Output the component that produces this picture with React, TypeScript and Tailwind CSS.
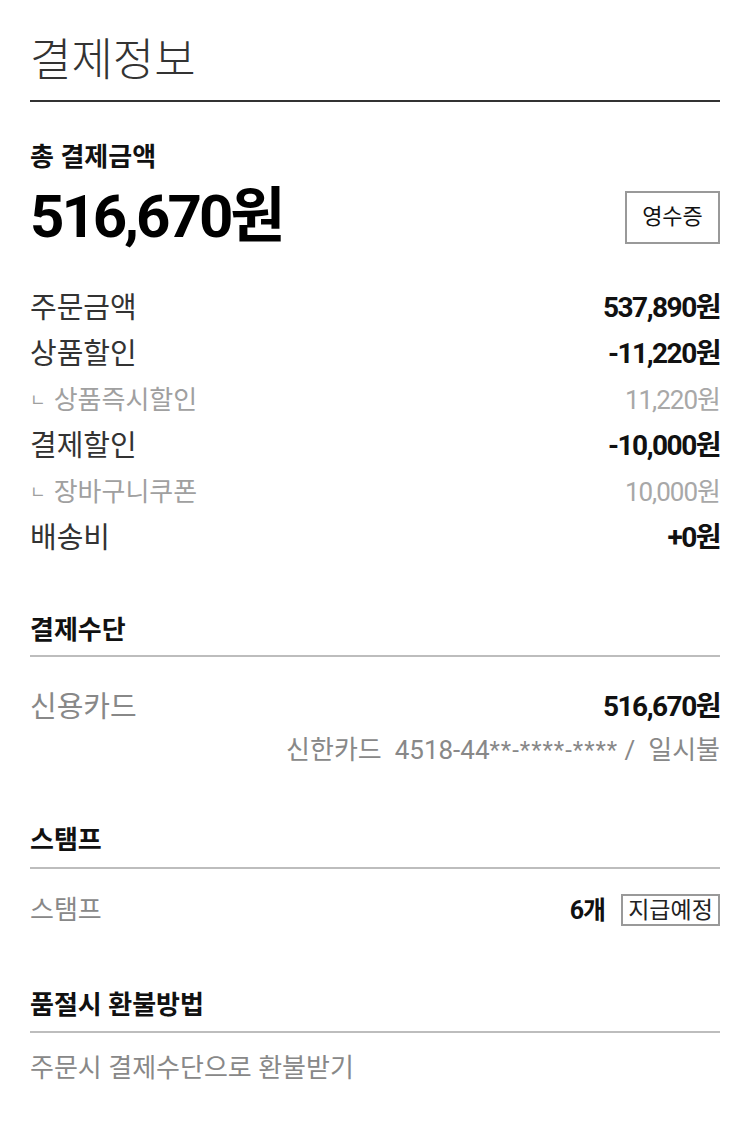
import React from "react";

const F = "font-['Roboto','Noto_Sans_CJK_KR',sans-serif]";

function Row({
  label,
  value,
  sub,
}: {
  label: string;
  value: string;
  sub?: boolean;
}) {
  if (sub) {
    return (
      <div className="flex h-[46px] items-center justify-between">
        <span className="flex items-center text-[26px] leading-none text-[#a0a0a0]">
          <span className="mr-[8px] text-[17px]">ㄴ</span>
          {label}
        </span>
        <span className="text-[26px] leading-none tracking-[-1px] text-[#a8a8a8]">
          {value}
        </span>
      </div>
    );
  }
  return (
    <div className="flex h-[46px] items-center justify-between">
      <span className="text-[29px] leading-none text-[#333]">{label}</span>
      <span className="text-[28px] font-bold leading-none tracking-[-1.5px] text-[#111]">
        {value}
      </span>
    </div>
  );
}

function SectionHeader({ title, pb }: { title: string; pb: string }) {
  return (
    <div className={`border-b-2 border-[#bdbdbd] ${pb}`}>
      <div className="flex h-[30px] items-center text-[26px] font-bold leading-none text-[#111]">
        {title}
      </div>
    </div>
  );
}

export default function App() {
  return (
    <div className={`${F} min-h-[1126px] w-[750px] bg-white px-[30px]`}>
      <div className="border-b-2 border-[#333] pt-[34px] pb-[14px]">
        <h1 className="flex h-[52px] items-center text-[45px] font-light leading-none text-[#333]">
          결제정보
        </h1>
      </div>

      <div className="mt-[40px] flex h-[30px] items-center text-[26px] font-bold leading-none text-[#111]">
        총 결제금액
      </div>
      <div className="mt-[15px] flex h-[60px] items-center justify-between">
        <span className="text-[60px] font-bold leading-none tracking-[-3px] text-black">
          516,670원
        </span>
        <button className="flex h-[53px] w-[95px] items-center justify-center border-2 border-[#999] bg-white text-[22px] leading-none text-[#111]">
          영수증
        </button>
      </div>

      <div className="mt-[38px]">
        <Row label="주문금액" value="537,890원" />
        <Row label="상품할인" value="-11,220원" />
        <Row label="상품즉시할인" value="11,220원" sub />
        <Row label="결제할인" value="-10,000원" />
        <Row label="장바구니쿠폰" value="10,000원" sub />
        <Row label="배송비" value="+0원" />
      </div>

      <div className="mt-[54px]">
        <SectionHeader title="결제수단" pb="pb-[10px]" />
      </div>
      <div className="mt-[30px] flex h-[40px] items-center justify-between">
        <span className="text-[29px] leading-none text-[#888]">신용카드</span>
        <span className="text-[28px] font-bold leading-none tracking-[-1.5px] text-[#111]">
          516,670원
        </span>
      </div>
      <div className="mt-[8px] flex h-[30px] items-center justify-end text-[26px] leading-none text-[#888]">
        <span>신한카드&nbsp; 4518-44</span>
        <span className="text-[24px] tracking-[1px]">**-****-****</span>
        <span>&nbsp;/&nbsp; 일시불</span>
      </div>

      <div className="mt-[60px]">
        <SectionHeader title="스탬프" pb="pb-[12px]" />
      </div>
      <div className="mt-[21px] flex h-[40px] items-center justify-between">
        <span className="text-[26px] leading-none text-[#888]">스탬프</span>
        <span className="flex items-center">
          <span className="text-[25px] font-bold leading-none tracking-[-1px] text-[#111]">
            6개
          </span>
          <span className="ml-[16px] flex h-[32px] w-[99px] items-center justify-center border-2 border-[#999] text-[23px] leading-none text-[#222]">
            지급예정
          </span>
        </span>
      </div>

      <div className="mt-[60px]">
        <SectionHeader title="품절시 환불방법" pb="pb-[11px]" />
      </div>
      <div className="mt-[20px] flex h-[30px] items-center text-[26px] leading-none text-[#888]">
        주문시 결제수단으로 환불받기
      </div>
    </div>
  );
}
